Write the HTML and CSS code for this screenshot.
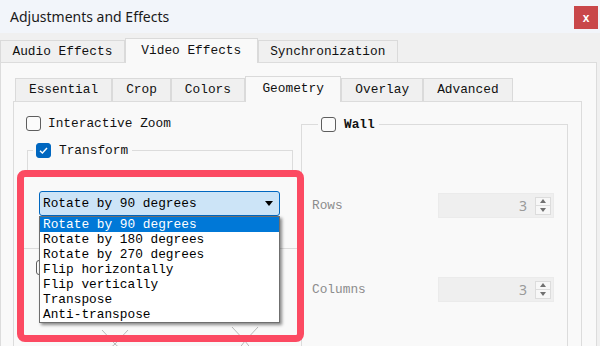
FILE: index.html
```html
<!DOCTYPE html>
<html>
<head>
  <title>Adjustments and Effects</title>
  <link rel="stylesheet" href="styles.css">
</head>
<body>
  <div class="titlebar">
    <span class="title">Adjustments and Effects</span>
    <span class="close">x</span>
  </div>

  <div class="tabs top-tabs">
    <div class="tab">Audio Effects</div>
    <div class="tab active">Video Effects</div>
    <div class="tab">Synchronization</div>
  </div>

  <div class="outer-panel">
    <div class="tabs sub-tabs">
      <div class="tab">Essential</div>
      <div class="tab">Crop</div>
      <div class="tab">Colors</div>
      <div class="tab active">Geometry</div>
      <div class="tab">Overlay</div>
      <div class="tab">Advanced</div>
    </div>

    <div class="inner-panel">
      <div class="geo">
        <!-- left column: zoom + transform -->
        <div class="col-left">
          <div class="check"><span class="box"></span>Interactive Zoom</div>

          <fieldset class="group transform">
            <legend><span class="box on"><svg width="11" height="11" viewBox="0 0 11 11"><path d="M2 5.8 L4.4 8 L9 3" fill="none" stroke="#fff" stroke-width="1.4"/></svg></span>Transform</legend>
            <div class="group-body"></div>
          </fieldset>

          <div class="combo-wrap">
            <div class="combo">Rotate by 90 degrees<span class="arrow"></span></div>
            <ul class="dropdown">
              <li class="selected">Rotate by 90 degrees</li>
              <li>Rotate by 180 degrees</li>
              <li>Rotate by 270 degrees</li>
              <li>Flip horizontally</li>
              <li>Flip vertically</li>
              <li>Transpose</li>
              <li>Anti-transpose</li>
            </ul>
          </div>

          <div class="subgroup">
            <span class="box"></span>
            <svg class="diagram" width="276" height="70" viewBox="0 0 276 70">
              <g stroke="#b9b9b9" stroke-width="1" fill="none">
                <path d="M80 50 L93 64 L106 50 M93 64 L86 70 M93 64 L100 70"/>
                <path d="M210 47 L223 61 L236 47 M223 61 L216 70 M223 61 L230 70"/>
              </g>
            </svg>
          </div>

          <div class="highlight"></div>
        </div>

        <!-- right column: wall -->
        <div class="col-right">
          <fieldset class="group wall">
            <legend><span class="box"></span><b>Wall</b></legend>
            <div class="field rows">
              <span>Rows</span>
              <div class="spin"><span class="value">3</span><span class="spin-btns"><i class="up"></i><i class="down"></i></span></div>
            </div>
            <div class="field cols">
              <span>Columns</span>
              <div class="spin"><span class="value">3</span><span class="spin-btns"><i class="up"></i><i class="down"></i></span></div>
            </div>
          </fieldset>
        </div>
      </div>
    </div>
  </div>
</body>
</html>
```

FILE: styles.css
```css
/* window */
body {
  margin: 0;
  width: 600px;
  height: 346px;
  overflow: hidden;
  background-color: #f0f0f0;
  font-family: "Liberation Mono", monospace;
  font-size: 12.8px;
  color: #111;
}

.titlebar {
  height: 33px;
  display: flex;
  align-items: center;
  justify-content: space-between;
  padding: 0 2px 0 10px;
  background-color: #f2f5fa;
}

.title {
  font-family: "Noto Sans", sans-serif;
  font-size: 14px;
  color: #1a1a1a;
}

.close {
  width: 24px;
  height: 23px;
  margin-top: 2px;
  display: flex;
  align-items: center;
  justify-content: center;
  background-color: #c9474a;
  color: #fff;
  font-family: "Liberation Sans", sans-serif;
  font-size: 12px;
  font-weight: bold;
}

/* tabs */
.tabs {
  display: flex;
  align-items: flex-end;
}

.top-tabs {
  margin-top: 5px;
}

.tab {
  height: 21px;
  line-height: 21px;
  padding: 0 11.5px;
  border: 1px solid #dadada;
  border-bottom: none;
  background-color: #f0f0f0;
  white-space: nowrap;
}

.tab.active {
  height: 24px;
  line-height: 23px;
  margin-bottom: -1px;
  padding: 0 15.5px;
  background-color: #f9f9f9;
  position: relative;
  z-index: 1;
}

.sub-tabs {
  margin-left: 2px;
}

.sub-tabs .tab {
  height: 22px;
  line-height: 22px;
  padding: 0 13px;
}

.sub-tabs .tab.active {
  height: 25px;
  line-height: 24px;
  padding: 0 16.5px;
}

.outer-panel {
  margin-right: 3px;
  height: 270px;
  overflow: hidden;
  padding: 13px 14px 0 12px;
  border: 1px solid #dcdcdc;
  border-bottom: none;
  background-color: #f9f9f9;
}

.inner-panel {
  height: 244px;
  border: 1px solid #dcdcdc;
  border-bottom: none;
  background-color: #f9f9f9;
}

.geo {
  display: flex;
}

/* checkboxes */
.box {
  display: inline-flex;
  align-items: center;
  justify-content: center;
  width: 13px;
  height: 13px;
  border: 1px solid #5e5e5e;
  border-radius: 3px;
  background-color: #fbfbfb;
  flex: none;
}

.box.on {
  background-color: #0067c0;
  border-color: #0067c0;
}

.check {
  display: flex;
  align-items: center;
  gap: 7px;
  height: 15px;
  margin-left: 12px;
}

/* group boxes */
.group {
  margin: 0;
  padding: 0;
  border: 1px solid #dcdcdc;
  min-width: 0;
}

.group legend {
  display: flex;
  align-items: center;
  gap: 8px;
  height: 16px;
  padding: 0 4px 0 3px;
}

/* left column */
.col-left {
  width: 287px;
  height: 244px;
  padding-top: 14px;
  box-sizing: border-box;
  position: relative;
}

.transform {
  margin: 11px 8px 0 13px;
}

.transform legend {
  margin-left: 5px;
}

.group-body {
  height: 12px;
}

.combo-wrap {
  position: relative;
  width: 241px;
  margin: 20px 0 0 25px;
}

.combo {
  height: 25px;
  box-sizing: border-box;
  display: flex;
  align-items: center;
  justify-content: space-between;
  padding: 0 6px 0 3px;
  border: 1px solid #0067c0;
  border-radius: 3px;
  background-color: #cce4f7;
  color: #000;
}

.arrow {
  width: 0;
  height: 0;
  border-left: 4.5px solid transparent;
  border-right: 4.5px solid transparent;
  border-top: 5px solid #000;
}

.dropdown {
  position: absolute;
  top: 100%;
  left: 0;
  width: 241px;
  box-sizing: border-box;
  margin: 0;
  padding: 0;
  list-style: none;
  border: 1px solid #6f6f6f;
  background-color: #fff;
  box-shadow: 2px 2px 3px rgba(0, 0, 0, 0.45);
  z-index: 3;
  color: #000;
}

.dropdown li {
  height: 15px;
  line-height: 15px;
  padding-left: 3px;
  white-space: nowrap;
}

.dropdown li.selected {
  background-color: #0078d7;
  color: #fff;
}

.subgroup {
  width: 276px;
  margin: 32px 0 0 8px;
  border-top: 1px solid #dcdcdc;
}

.subgroup .box {
  margin: 11px 0 0 14px;
}

.diagram {
  display: block;
  margin-top: 1px;
}

/* annotation frame */
.highlight {
  position: absolute;
  left: 3px;
  top: 68px;
  width: 287px;
  height: 172px;
  box-sizing: border-box;
  border: 7px solid #fc4a62;
  border-radius: 8px;
  z-index: 2;
}

/* right column */
.col-right {
  width: 267px;
  padding-top: 14px;
}

.wall {
  box-sizing: border-box;
  width: 267px;
  height: 240px;
  padding: 0 13px 0 10px;
}

.wall legend {
  margin-left: 6px;
}

.field {
  display: flex;
  align-items: center;
  justify-content: space-between;
  height: 25px;
  color: #8c8c8c;
}

.field.rows {
  margin-top: 61px;
}

.field.cols {
  margin-top: 59px;
}

.spin {
  width: 116px;
  height: 25px;
  box-sizing: border-box;
  display: flex;
  align-items: center;
  justify-content: flex-end;
  padding-right: 2px;
  border: 1px solid #ebebeb;
  background-color: #efefef;
}

.value {
  margin-right: 8px;
  font-family: "Noto Sans", sans-serif;
  font-size: 14px;
  color: #9a9a9a;
}

.spin-btns {
  width: 16px;
  height: 18px;
  box-sizing: border-box;
  display: flex;
  flex-direction: column;
  border: 1px solid #dcdcdc;
  background-color: #f7f7f7;
}

.spin-btns i {
  flex: 1;
  display: flex;
  align-items: center;
  justify-content: center;
}

.spin-btns i.up {
  border-bottom: 1px solid #dcdcdc;
}

.spin-btns i::after {
  content: "";
  width: 0;
  height: 0;
  border-left: 3.5px solid transparent;
  border-right: 3.5px solid transparent;
}

.spin-btns i.up::after {
  border-bottom: 4px solid #707070;
}

.spin-btns i.down::after {
  border-top: 4px solid #707070;
}
```
